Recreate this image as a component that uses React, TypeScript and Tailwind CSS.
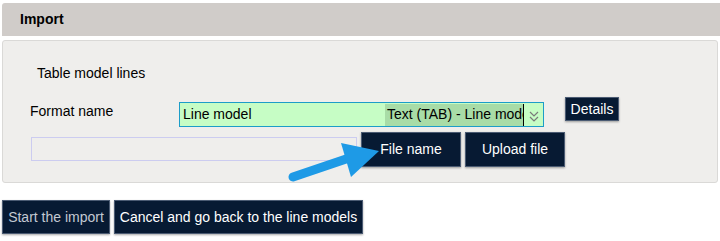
export default function App() {
  const btn =
    'border border-[#4b5b73] bg-[#071a33] text-[14px] shadow-[0_1px_2px_rgba(0,0,0,0.35)]';

  return (
    <div className="relative h-[241px] w-[720px] overflow-hidden bg-white font-['Liberation_Sans',Arial,sans-serif] text-black">
      <div className="ml-[2px] mt-[3px] flex h-[33px] items-center rounded-tl-[3px] bg-[#d0ccc9] pl-[18px] text-[14px] font-bold">
        Import
      </div>

      <div className="ml-[2px] mr-[2px] mt-[4px] rounded-[3px] border border-[#dad9d7] bg-[#efeeec] pb-[15px] pt-[24px]">
        <p className="pl-[34px] text-[14px] leading-[16px]">Table model lines</p>

        <div className="mt-[16px] flex items-start">
          <span className="ml-[27px] mt-[6px] w-[149px] text-[14px] leading-[16px]">Format name</span>
          <div className="mt-[5px] flex h-[25px] w-[365px] items-center border border-[#1c9dc8] bg-[#c6fdc5] pl-[3px] text-[14px]">
            <span className="w-[202px]">Line model</span>
            <span className="flex h-[22px] w-[139px] items-center overflow-hidden whitespace-nowrap border-r border-black bg-[#a8dca7] pl-[2px]">
              Text (TAB) - Line model
            </span>
            <svg width="12" height="14" viewBox="0 0 12 14" className="ml-[4px] mt-[3px]">
              <path d="M2 3 L6 7 L10 3 M2 8 L6 12 L10 8" fill="none" stroke="#7a7a7a" strokeWidth="1.2" />
            </svg>
          </div>
          <button className={`${btn} ml-[21px] h-[24px] w-[54px] text-white`}>Details</button>
        </div>

        <div className="mt-[5px] flex items-start">
          <div className="ml-[28px] mt-[5px] h-[24px] w-[326px] border border-[#ccccf0] bg-[#efeeec]" />
          <button className={`${btn} ml-[4px] h-[35px] w-[100px] text-white`}>File name</button>
          <button className={`${btn} ml-[4px] h-[35px] w-[100px] text-white`}>Upload file</button>
        </div>
      </div>

      <div className="ml-[2px] mt-[17px] flex gap-[4px]">
        <button className={`${btn} h-[34px] w-[108px] whitespace-nowrap text-[#c3c9d2]`}>Start the import</button>
        <button className={`${btn} h-[34px] w-[249px] whitespace-nowrap text-white`}>Cancel and go back to the line models</button>
      </div>

      <svg className="absolute left-0 top-0" width="720" height="241" viewBox="0 0 720 241">
        <path d="M293 177 L352 157" stroke="#1e9ae6" strokeWidth="9" strokeLinecap="round" fill="none" />
        <path d="M341 143 L379 151 L351 177 Z" fill="#1e9ae6" />
      </svg>
    </div>
  );
}
